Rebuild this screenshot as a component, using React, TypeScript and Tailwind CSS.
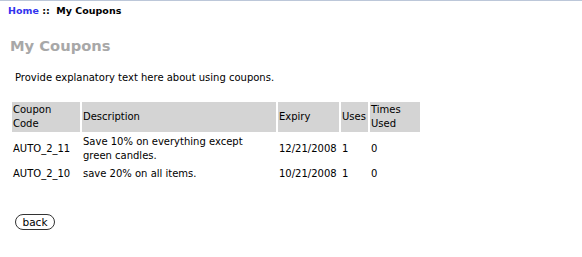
export default function App() {
  const rows = [
    { code: "AUTO_2_11", desc: "Save 10% on everything except green candles.", expiry: "12/21/2008", uses: "1", times: "0" },
    { code: "AUTO_2_10", desc: "save 20% on all items.", expiry: "10/21/2008", uses: "1", times: "0" },
  ];

  return (
    <div className="min-h-[257px] bg-white text-[10px] text-black border-t border-[#bcc7d9]" style={{ fontFamily: '"DejaVu Sans", Verdana, sans-serif' }}>
      {/* breadcrumb */}
      <div className="px-2 pt-[3px] leading-[14px] font-bold text-[9.5px]">
        <a className="text-[#3333ee]">Home</a> ::&nbsp; My Coupons
      </div>

      <h1 className="ml-[10px] mt-[19px] text-[14.7px] leading-[18px] font-bold text-[#a8a8a8]">My Coupons</h1>

      <p className="ml-[15px] mt-[16px] leading-[14px]">Provide explanatory text here about using coupons.</p>

      <table className="ml-[10px] mt-[15px] border-separate border-spacing-[2px] leading-[14px]">
        <thead>
          <tr className="bg-[#d4d4d4] text-left align-middle">
            <th className="w-[68px] p-[1px] font-normal">Coupon<br />Code</th>
            <th className="w-[194px] p-[1px] font-normal">Description</th>
            <th className="w-[61px] p-[1px] font-normal">Expiry</th>
            <th className="w-[27px] p-[1px] font-normal">Uses</th>
            <th className="w-[50px] p-[1px] font-normal">Times<br />Used</th>
          </tr>
        </thead>
        <tbody>
          {rows.map((r) => (
            <tr key={r.code} className="align-middle">
              <td className="p-[1px]">{r.code}</td>
              <td className="p-[1px] pr-[6px]">{r.desc}</td>
              <td className="p-[1px]">{r.expiry}</td>
              <td className="p-[1px]">{r.uses}</td>
              <td className="p-[1px]">{r.times}</td>
            </tr>
          ))}
        </tbody>
      </table>

      <button className="ml-[15px] mt-[30px] h-[16px] w-[40px] rounded-full border border-[#333] bg-white text-[10.5px] leading-[13px]">
        back
      </button>
    </div>
  );
}
